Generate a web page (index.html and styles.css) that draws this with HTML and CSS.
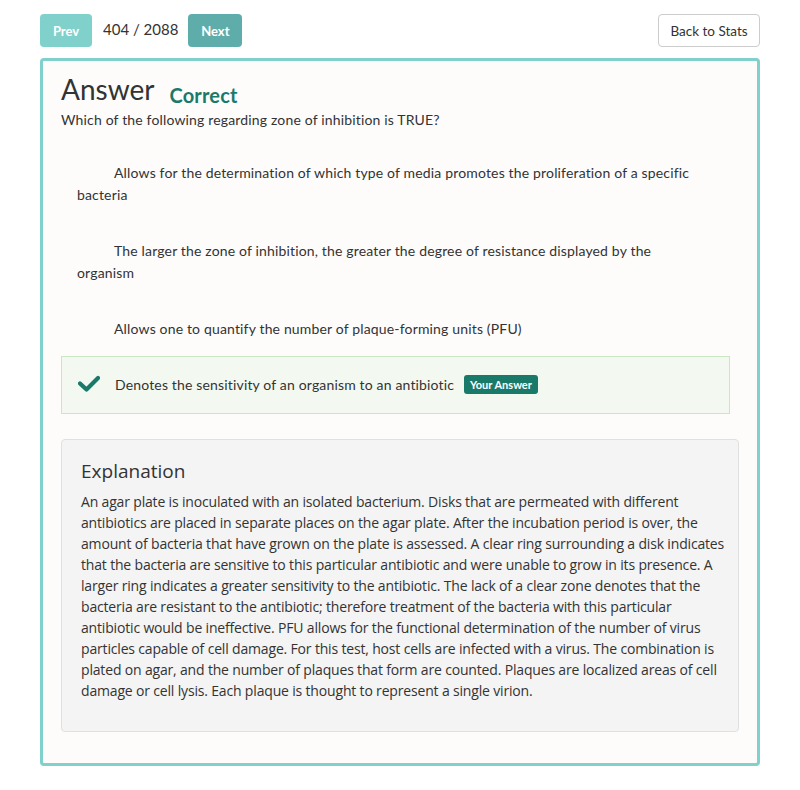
FILE: index.html
```html
<!DOCTYPE html>
<html>
<head>
<meta charset="utf-8">
<link rel="stylesheet" href="styles.css">
</head>
<body>
<div class="topbar">
  <div class="nav">
    <button class="btn btn-prev">Prev</button>
    <span class="count">404 / 2088</span>
    <button class="btn btn-next">Next</button>
  </div>
  <button class="btn-back">Back to Stats</button>
</div>
<div class="card">
  <div class="title-row">
    <h1 class="title">Answer</h1>
    <span class="status">Correct</span>
  </div>
  <p class="question">Which of the following regarding zone of inhibition is TRUE?</p>
  <ul class="choices">
    <li class="choice"><span class="icon"></span>Allows for the determination of which type of media promotes the proliferation of a specific bacteria</li>
    <li class="choice"><span class="icon"></span>The larger the zone of inhibition, the greater the degree of resistance displayed by the organism</li>
    <li class="choice"><span class="icon"></span>Allows one to quantify the number of plaque-forming units (PFU)</li>
    <li class="choice choice-correct"><span class="icon"><svg width="22" height="17" viewBox="0 0 22 17"><path d="M2 8.5 L8.5 14.5 L20 3" fill="none" stroke="#1a7a6a" stroke-width="4.2" stroke-linecap="round" stroke-linejoin="round"/></svg></span>Denotes the sensitivity of an organism to an antibiotic <span class="badge">Your Answer</span></li>
  </ul>
  <div class="explanation">
    <h2 class="exp-title">Explanation</h2>
    <p class="exp-text">An agar plate is inoculated with an isolated bacterium. Disks that are permeated with different antibiotics are placed in separate places on the agar plate. After the incubation period is over, the amount of bacteria that have grown on the plate is assessed. A clear ring surrounding a disk indicates that the bacteria are sensitive to this particular antibiotic and were unable to grow in its presence. A larger ring indicates a greater sensitivity to the antibiotic. The lack of a clear zone denotes that the bacteria are resistant to the antibiotic; therefore treatment of the bacteria with this particular antibiotic would be ineffective. PFU allows for the functional determination of the number of virus particles capable of cell damage. For this test, host cells are infected with a virus. The combination is plated on agar, and the number of plaques that form are counted. Plaques are localized areas of cell damage or cell lysis. Each plaque is thought to represent a single virion.</p>
  </div>
</div>
</body>
</html>
```
FILE: styles.css
```css
* { box-sizing: border-box; }
body {
  margin: 0;
  background: #ffffff;
  font-family: Lato, "Liberation Sans", sans-serif;
  color: #333;
}
.topbar {
  display: flex;
  justify-content: space-between;
  align-items: center;
  padding: 14px 40px 0 40px;
}
.nav {
  display: flex;
  align-items: center;
}
.btn {
  height: 33px;
  border: none;
  border-radius: 4px;
  color: #fff;
  font-family: Lato, sans-serif;
  font-weight: bold;
  font-size: 13px;
  padding: 0 12px;
}
.btn-prev { background: #80d0cc; width: 52px; }
.btn-next { background: #5fadaa; width: 54px; }
.count {
  font-size: 15px;
  color: #333;
  margin: 0 10px 0 11px;
  position: relative;
  top: -2px;
}
.btn-back {
  height: 33px;
  width: 102px;
  background: #fff;
  border: 1px solid #ccc;
  border-radius: 4px;
  font-family: Lato, sans-serif;
  font-size: 13.5px;
  color: #333;
  padding: 0;
}
.card {
  margin: 11px 40px 0 40px;
  border: 3px solid #80d0cc;
  border-radius: 4px;
  background: #fdfcfb;
  padding: 10px 18px 31px 18px;
  height: 708px;
}
.title-row {
  display: flex;
  align-items: baseline;
}
.title {
  margin: 0;
  font-size: 28px;
  font-weight: normal;
  line-height: 36px;
  color: #333;
}
.status {
  margin-left: 15px;
  font-size: 20px;
  font-weight: bold;
  color: #1a7a6a;
  position: relative;
  top: 3px;
  letter-spacing: 0.2px;
}
.question {
  margin: 3px 0 0 0;
  font-size: 14px;
  line-height: 20px;
  letter-spacing: 0.16px;
}
.choices {
  list-style: none;
  margin: 21px 9px 0 0;
  padding: 0;
}
.choice {
  padding: 10px 30px 10px 15px;
  font-size: 14px;
  line-height: 22px;
  letter-spacing: 0.16px;
  margin-bottom: 12px;
  border: 1px solid transparent;
}
.icon {
  display: inline-block;
  width: 37px;
}
.choice-correct {
  background: #f3f9f1;
  border-color: #c8e8c2;
  padding: 17px 15px 17px 16px;
  margin-top: -7px;
  margin-bottom: 0;
}
.choice-correct .icon svg {
  vertical-align: -2px;
}
.badge {
  display: inline-block;
  background: #1a7a6a;
  color: #fff;
  font-size: 11px;
  font-weight: bold;
  line-height: 19px;
  padding: 0 6px;
  border-radius: 3px;
  margin-left: 6px;
  vertical-align: 1px;
  letter-spacing: 0;
}
.explanation {
  margin-top: 25px;
  background: #f4f4f4;
  border: 1px solid #e0e0e0;
  border-radius: 4px;
  padding: 17px 9px 30px 19px;
  font-family: "Open Sans", sans-serif;
}
.exp-title {
  margin: 0 0 6px 0;
  font-size: 19px;
  font-weight: normal;
  line-height: 28px;
  color: #333;
}
.exp-text {
  margin: 0;
  font-size: 14px;
  line-height: 21px;
  letter-spacing: -0.17px;
  color: #333;
}
```
